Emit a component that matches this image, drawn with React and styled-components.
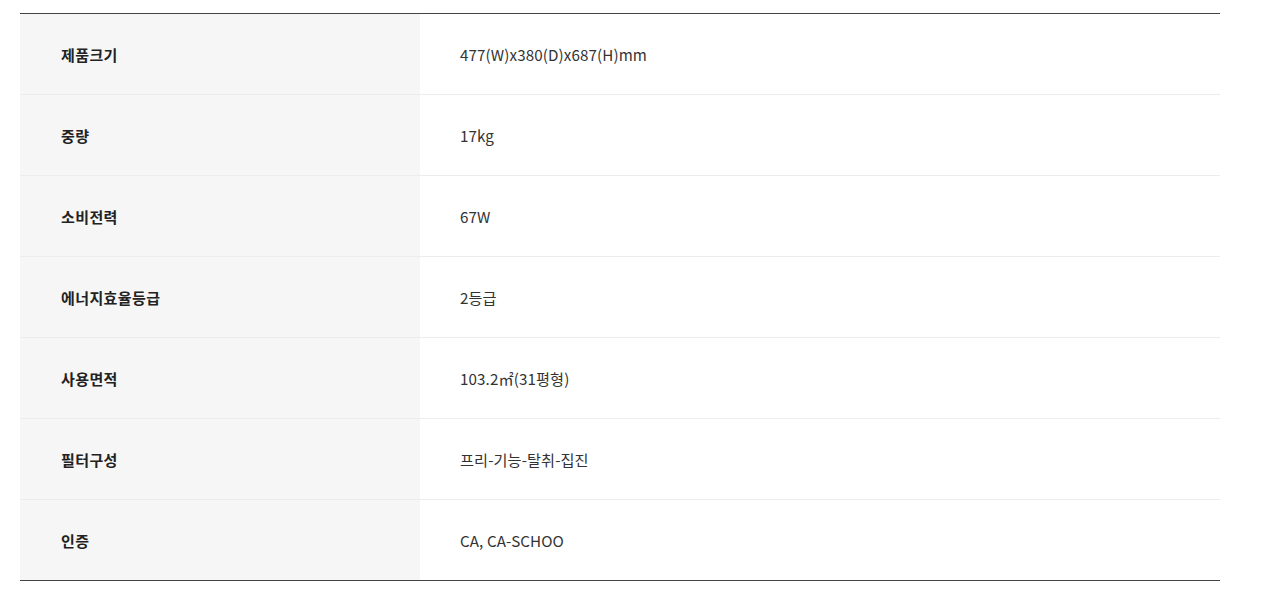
import React from 'react';
import styled, { createGlobalStyle } from 'styled-components';

const GlobalStyle = createGlobalStyle`
  body {
    margin: 0;
    background: #fff;
    font-family: "Noto Sans CJK KR", "Noto Sans", sans-serif;
  }
`;

const Wrapper = styled.div`
  padding: 13px 68px 0 20px;
`;

const SpecTable = styled.dl`
  margin: 0;
  width: 1200px;
  border-top: 1px solid #444;
  border-bottom: 1px solid #444;
`;

const Row = styled.div`
  display: grid;
  grid-template-columns: 400px 1fr;
  height: 80px;
  border-top: ${({ $first }) => ($first ? 'none' : '1px solid #ececec')};
`;

const Label = styled.dt`
  display: flex;
  align-items: center;
  padding-left: 41px;
  background: #f6f6f6;
  font-size: 15px;
  letter-spacing: 0.4px;
  font-weight: 700;
  color: #222;
`;

const Value = styled.dd`
  display: flex;
  align-items: center;
  margin: 0;
  padding-left: 40px;
  font-size: 15.2px;
  letter-spacing: 0.1px;
  font-weight: 400;
  color: #333;
`;

const specs = [
  { label: '제품크기', value: '477(W)x380(D)x687(H)mm' },
  { label: '중량', value: '17kg' },
  { label: '소비전력', value: '67W' },
  { label: '에너지효율등급', value: '2등급' },
  { label: '사용면적', value: '103.2㎡(31평형)' },
  { label: '필터구성', value: '프리-기능-탈취-집진' },
  { label: '인증', value: 'CA, CA-SCHOO' },
];

const App = () => (
  <>
    <GlobalStyle />
    <Wrapper>
      <SpecTable>
        {specs.map((spec, i) => (
          <Row key={spec.label} $first={i === 0}>
            <Label>{spec.label}</Label>
            <Value>{spec.value}</Value>
          </Row>
        ))}
      </SpecTable>
    </Wrapper>
  </>
);

export default App;
